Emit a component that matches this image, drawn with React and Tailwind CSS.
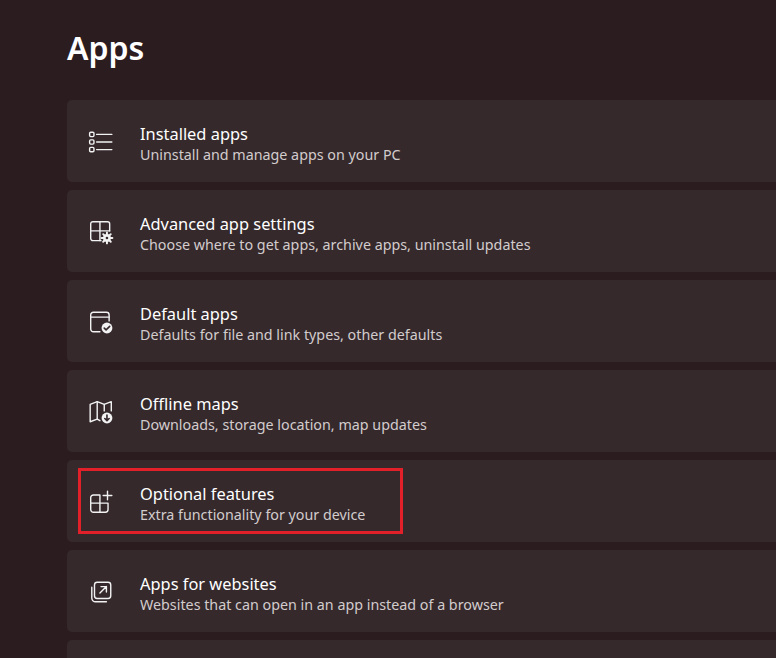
const S = { stroke: "currentColor", strokeWidth: 1.3, fill: "none", strokeLinecap: "round", strokeLinejoin: "round" };

const I1 = () => (
  <svg width="26" height="26" viewBox="0 0 24 24" {...S}>
    <rect x="1.5" y="3" width="4" height="4" rx="1" /><rect x="1.5" y="10" width="4" height="4" rx="1" /><rect x="1.5" y="17" width="4" height="4" rx="1" />
    <path d="M8 5h14M8 12h14M8 19h14" />
  </svg>
);
const I2 = () => (
  <svg width="26" height="26" viewBox="0 0 24 24" {...S}>
    <path d="M12 20H4.5a2 2 0 0 1-2-2V4.5a2 2 0 0 1 2-2H18a2 2 0 0 1 2 2V11" />
    <path d="M2.5 11h17.5M11 2.5V20" />
    <circle cx="17.5" cy="17.5" r="3.6" fill="currentColor" stroke="none" />
    <path d="M17.5 12.5v10M12.5 17.5h10M14 14l7 7M21 14l-7 7" strokeWidth="1.8" />
    <circle cx="17.5" cy="17.5" r="1.2" fill="#35292c" stroke="none" />
  </svg>
);
const I3 = () => (
  <svg width="26" height="26" viewBox="0 0 24 24" {...S}>
    <path d="M11 21H5a2.5 2.5 0 0 1-2.5-2.5V5.5A2.5 2.5 0 0 1 5 3h12a2.5 2.5 0 0 1 2.5 2.5V11" />
    <path d="M2.5 7.5h17" />
    <circle cx="17.5" cy="17.5" r="5" fill="currentColor" stroke="none" />
    <path d="M15 17.6l1.7 1.7 3.3-3.3" stroke="#35292c" strokeWidth="1.5" />
  </svg>
);
const I4 = () => (
  <svg width="26" height="26" viewBox="0 0 24 24" {...S}>
    <path d="M11 20l-2.5-1.5L2 21V5l6.5-2.5L15 5l6.5-2.5V11" />
    <path d="M8.5 2.5v16M15 5v6" />
    <circle cx="17.5" cy="17.5" r="5" fill="currentColor" stroke="none" />
    <path d="M17.5 14.8v5M15.5 18l2 2 2-2" stroke="#35292c" strokeWidth="1.5" />
  </svg>
);
const I5 = () => (
  <svg width="26" height="26" viewBox="0 0 24 24" {...S}>
    <path d="M11 5.5H5a2.5 2.5 0 0 0-2.5 2.5v11A2.5 2.5 0 0 0 5 21.5h11a2.5 2.5 0 0 0 2.5-2.5v-6H2.5M11 5.5v16" />
    <path d="M18 2v8M14 6h8" />
  </svg>
);
const I6 = () => (
  <svg width="26" height="26" viewBox="0 0 24 24" {...S}>
    <rect x="6" y="3" width="15" height="15" rx="2.5" />
    <path d="M3.5 7.5v10A3.5 3.5 0 0 0 7 21h10" />
    <path d="M11 13l6-6M12 7h5v5" />
  </svg>
);

const items = [
  [I1, "Installed apps", "Uninstall and manage apps on your PC"],
  [I2, "Advanced app settings", "Choose where to get apps, archive apps, uninstall updates"],
  [I3, "Default apps", "Defaults for file and link types, other defaults"],
  [I4, "Offline maps", "Downloads, storage location, map updates"],
  [I5, "Optional features", "Extra functionality for your device", true],
  [I6, "Apps for websites", "Websites that can open in an app instead of a browser"],
  [null, "", ""],
];

export default function App() {
  return (
    <div className="w-[776px] h-[658px] overflow-hidden bg-[#2b1c20] pl-[67px] pt-[26px] text-white" style={{ fontFamily: '"Noto Sans", "Open Sans", sans-serif' }}>
      <h1 className="text-[32px] font-semibold leading-[44px] mb-[30px]">Apps</h1>
      <div className="flex flex-col gap-[8px] w-[760px]">
        {items.map(([Icon, t, s, hl], i) => (
          <div key={i} className="relative h-[82px] shrink-0 rounded-[5px] bg-[#35292c] flex items-center pl-[21px]">
            {hl && <div className="absolute left-[11px] top-[8px] w-[325px] h-[66px] border-[3px] border-[#e2202a]" />}
            <div className="w-[52px] text-[#f2f2f2] pt-[2px]">{Icon && <Icon />}</div>
            <div className="flex flex-col pt-[5px]">
              <div className="text-[16.4px] leading-[22px]">{t}</div>
              <div className="text-[14.3px] leading-[20px] text-[#d3cccd]">{s}</div>
            </div>
          </div>
        ))}
      </div>
    </div>
  );
}
